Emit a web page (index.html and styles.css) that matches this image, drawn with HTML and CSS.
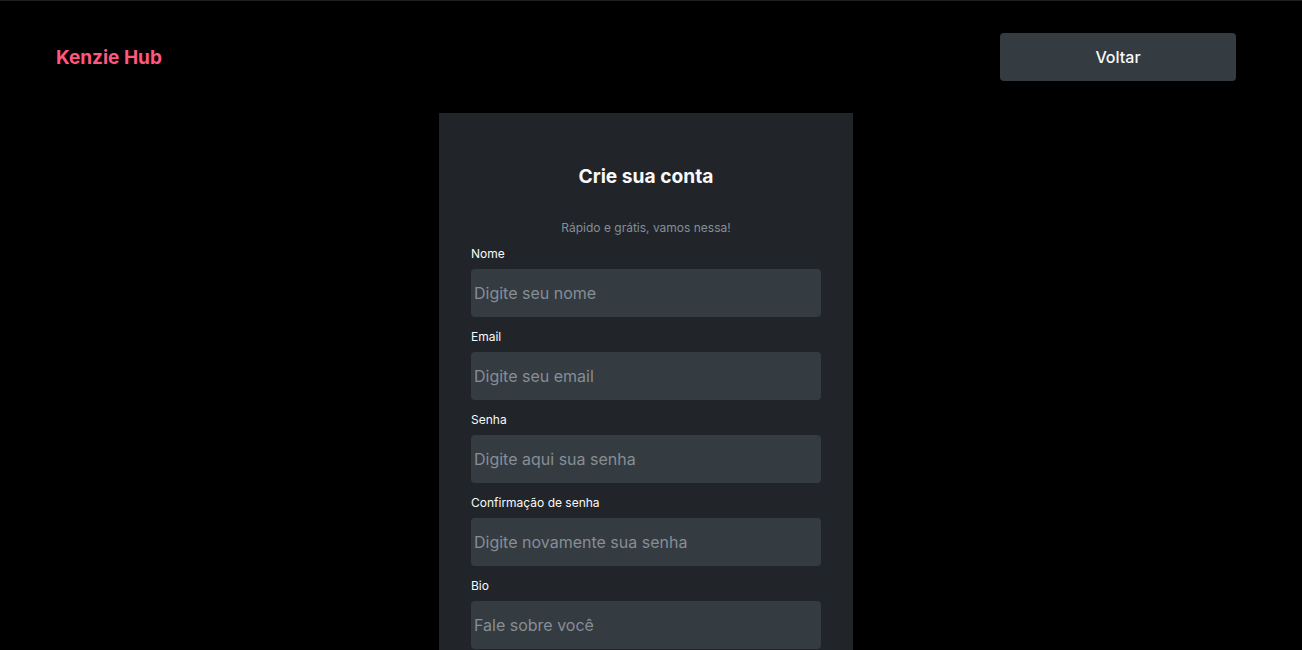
FILE: index.html
```html
<!DOCTYPE html>
<html lang="pt-BR">
<head>
<meta charset="utf-8">
<title>Kenzie Hub - Cadastro</title>
<link rel="stylesheet" href="styles.css">
</head>
<body>
<div class="page">
  <header class="header">
    <h1 class="logo">Kenzie Hub</h1>
    <button class="btn-back" type="button">Voltar</button>
  </header>
  <main class="main">
    <form class="card">
      <h2 class="card-title">Crie sua conta</h2>
      <p class="card-sub">Rápido e grátis, vamos nessa!</p>
      <div class="fields">
        <label class="field"><span class="field-label">Nome</span><input class="field-input" type="text" placeholder="Digite seu nome"></label>
        <label class="field"><span class="field-label">Email</span><input class="field-input" type="email" placeholder="Digite seu email"></label>
        <label class="field"><span class="field-label">Senha</span><input class="field-input" type="password" placeholder="Digite aqui sua senha"></label>
        <label class="field"><span class="field-label">Confirmação de senha</span><input class="field-input" type="password" placeholder="Digite novamente sua senha"></label>
        <label class="field"><span class="field-label">Bio</span><input class="field-input" type="text" placeholder="Fale sobre você"></label>
        <label class="field"><span class="field-label">Contato</span><input class="field-input" type="text" placeholder="Opção de contato"></label>
        <label class="field"><span class="field-label">Selecionar módulo</span><input class="field-input" type="text" placeholder="Primeiro módulo"></label>
        <button class="btn-submit" type="button">Cadastrar</button>
      </div>
    </form>
  </main>
</div>
</body>
</html>
```
FILE: styles.css
```css
* { box-sizing: border-box; }

html, body {
  margin: 0;
  padding: 0;
  background: #000000;
}

body {
  border-top: 1px solid #1f1f1f;
  font-family: Inter, "Noto Sans", sans-serif;
  color: #f8f9fa;
}

.page {
  width: 1292px;
}

.header {
  width: 1180px;
  margin: 0 auto;
  padding: 32px 0;
  display: flex;
  align-items: center;
  justify-content: space-between;
}

.logo {
  margin: 0;
  font-size: 19px;
  font-weight: 700;
  color: #ff577f;
}

.btn-back {
  width: 236px;
  height: 48px;
  border: 0;
  border-radius: 4px;
  background: #343b41;
  color: #f8f9fa;
  font-family: Inter, "Noto Sans", sans-serif;
  font-size: 16px;
  font-weight: 500;
}

.main {
  display: flex;
  justify-content: center;
}

.card {
  width: 414px;
  background: #212529;
  padding: 51px 32px 40px;
  display: flex;
  flex-direction: column;
  align-items: center;
}

.card-title {
  margin: 0;
  font-size: 19.2px;
  font-weight: 700;
  color: #f8f9fa;
}

.card-sub {
  margin: 32px 0 11px;
  font-size: 12px;
  color: #868e96;
}

.fields {
  width: 100%;
  display: flex;
  flex-direction: column;
  gap: 12px;
}

.field {
  display: flex;
  flex-direction: column;
  gap: 8px;
}

.field-label {
  font-size: 12px;
  color: #f8f9fa;
}

.field-input {
  height: 48px;
  width: 100%;
  border: 0;
  border-radius: 4px;
  background: #343b41;
  padding: 0 3px;
  font-family: Inter, "Noto Sans", sans-serif;
  font-size: 16px;
  color: #f8f9fa;
  outline: none;
}

.field-input::placeholder {
  color: #868e96;
}

.btn-submit {
  height: 48px;
  border: 0;
  border-radius: 4px;
  background: #59323f;
  color: #ffffff;
  font-family: Inter, "Noto Sans", sans-serif;
  font-size: 16px;
  font-weight: 500;
}
```
